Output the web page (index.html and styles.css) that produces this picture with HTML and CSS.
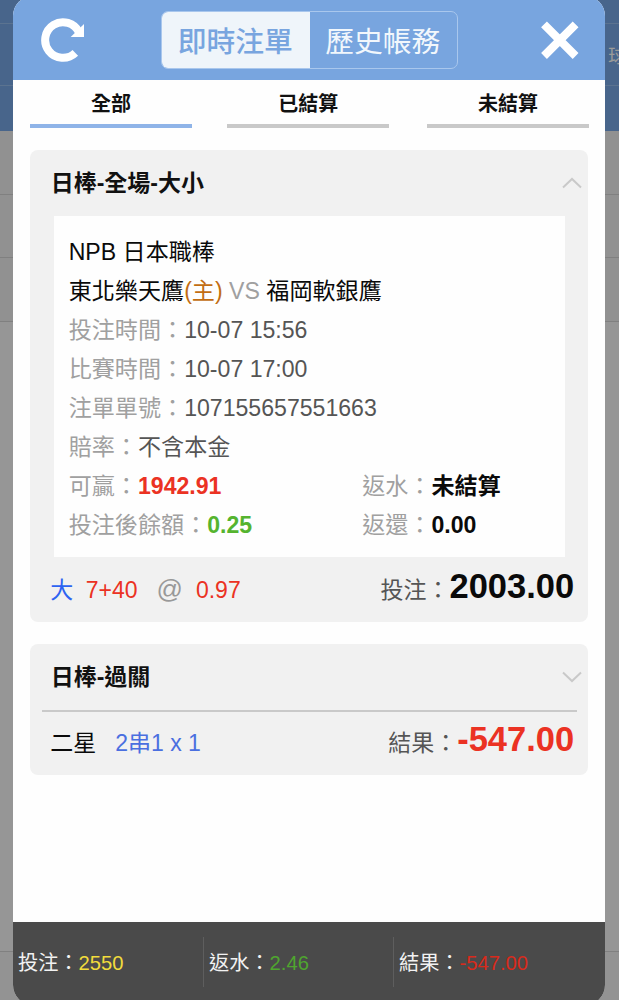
FILE: index.html
```html
<!DOCTYPE html>
<html lang="zh-TW">
<head>
<meta charset="utf-8">
<title>即時注單</title>
<link rel="stylesheet" href="styles.css">
</head>
<body>
<div class="screen">
  <div class="backdrop">
    <div class="backdrop-nav">
      <div class="nav-line nav-line-top"></div>
      <div class="nav-row"><span>球</span></div>
      <div class="nav-line nav-line-bottom"></div>
    </div>
    <div class="backdrop-row"></div>
    <div class="backdrop-row"></div>
    <div class="backdrop-row"></div>
    <div class="backdrop-row backdrop-fill"></div>
  </div>

  <main class="modal">
    <header class="header">
      <svg class="refresh" width="46" height="46" viewBox="0 0 46 46" aria-label="refresh">
        <path d="M35.3 35.9A17.8 17.8 0 1 1 39 15.3" fill="none" stroke="#fff" stroke-width="8"/>
        <path d="M44 7V19.9H30.7Z" fill="#fff"/>
      </svg>
      <div class="switch">
        <div class="switch-item switch-active">即時注單</div>
        <div class="switch-item">歷史帳務</div>
      </div>
      <svg class="close" width="38" height="38" viewBox="0 0 38 38" aria-label="close">
        <path d="M3 3.4L34.6 35M34.6 3.4L3 35" stroke="#fff" stroke-width="8.2"/>
      </svg>
    </header>

    <nav class="tabs">
      <div class="tab tab-active">全部</div>
      <div class="tab">已結算</div>
      <div class="tab">未結算</div>
    </nav>

    <section class="card">
      <div class="card-head">
        <h2>日棒-全場-大小</h2>
        <svg class="chevron" width="20" height="12" viewBox="0 0 20 12"><path d="M1 10.5L10 2L19 10.5" fill="none" stroke="#c9c9c9" stroke-width="2"/></svg>
      </div>
      <div class="detail">
        <div class="line name">NPB 日本職棒</div>
        <div class="line name">東北樂天鷹<span class="home">(主)</span> <span class="label">VS</span> 福岡軟銀鷹</div>
        <div class="line"><span class="label">投注時間：</span>10-07 15:56</div>
        <div class="line"><span class="label">比賽時間：</span>10-07 17:00</div>
        <div class="line"><span class="label">注單單號：</span>107155657551663</div>
        <div class="line"><span class="label">賠率：</span>不含本金</div>
        <div class="line pair">
          <div><span class="label">可贏：</span><b class="red">1942.91</b></div>
          <div><span class="label">返水：</span><b class="black">未結算</b></div>
        </div>
        <div class="line pair">
          <div><span class="label">投注後餘額：</span><b class="green">0.25</b></div>
          <div><span class="label">返還：</span><b class="black">0.00</b></div>
        </div>
      </div>
      <div class="summary">
        <div class="pick">
          <span class="pick-side">大</span>
          <span class="red pick-line">7+40</span>
          <span class="pick-at">@</span>
          <span class="red">0.97</span>
        </div>
        <div class="total"><span>投注：</span><b class="black">2003.00</b></div>
      </div>
    </section>

    <section class="card card-parlay">
      <div class="card-head">
        <h2>日棒-過關</h2>
        <svg class="chevron" width="20" height="12" viewBox="0 0 20 12"><path d="M1 1.5L10 10L19 1.5" fill="none" stroke="#c9c9c9" stroke-width="2"/></svg>
      </div>
      <div class="rule"></div>
      <div class="summary">
        <div class="pick">
          <span class="black parlay-name">二星</span>
          <span class="parlay">2串1 x 1</span>
        </div>
        <div class="total"><span>結果：</span><b class="red">-547.00</b></div>
      </div>
    </section>

    <footer class="footer">
      <div class="stat">投注：<span class="yellow">2550</span></div>
      <div class="stat">返水：<span class="green">2.46</span></div>
      <div class="stat">結果：<span class="red">-547.00</span></div>
    </footer>
  </main>
</div>
</body>
</html>
```
FILE: styles.css
```css
* { box-sizing: border-box; }

body {
  margin: 0;
  font-family: "Liberation Sans", "Noto Sans CJK TC", sans-serif;
  color: #555;
}

.screen {
  display: grid;
  height: 1000px;
  overflow: hidden;
}

.backdrop,
.modal { grid-area: 1 / 1; }

/* Dimmed page behind the dialog */
.backdrop {
  display: flex;
  flex-direction: column;
  height: 1000px;
  background: #939393;
}
.backdrop-nav {
  display: flex;
  flex-direction: column;
  height: 131px;
  padding-top: 23px;
  background: #48658b;
}
.nav-line { height: 1px; background: #5b7390; }
.nav-row {
  display: flex;
  align-items: center;
  height: 61px;
  padding-left: 608px;
  overflow: hidden;
  font-size: 19px;
  color: #9b9b99;
}
.backdrop-row {
  height: 63.5px;
  border-bottom: 1px solid #808080;
  background: #919191;
}
.backdrop-fill { height: 630px; background: #969696; }

/* Dialog */
.modal {
  display: flex;
  flex-direction: column;
  width: 592px;
  height: 1009px;
  margin: -4px 0 0 13px;
  border-radius: 20px;
  overflow: hidden;
  background: #fefefe;
}

.header {
  display: flex;
  flex: none;
  align-items: center;
  height: 84px;
  padding: 4px 26px 0 27px;
  background: #78a5df;
}
.switch {
  display: flex;
  width: 297px;
  height: 58px;
  margin: 0 0 0 75px;
  border: 1.5px solid #a9c7ed;
  border-radius: 7px;
  overflow: hidden;
}
.switch-item {
  flex: 1;
  font-size: 28.8px;
  line-height: 60px;
  text-align: center;
  color: #f2f7fc;
  text-indent: -1px;
}
.switch-active {
  background: #eff5fa;
  font-weight: 500;
  color: #78a5df;
}
.close { margin: 0 0 0 auto; }

.tabs {
  display: flex;
  flex: none;
  justify-content: space-between;
  height: 48px;
  margin: 0 16px 0 17px;
}
.tab {
  width: 162px;
  border-bottom: 4px solid #c9c9c9;
  font-size: 20px;
  font-weight: bold;
  line-height: 49px;
  text-align: center;
  color: #111;
}
.tab:nth-child(2) { margin-right: 2.4px; }
.tab-active { border-color: #8fb4e8; }

.card {
  flex: none;
  width: 558px;
  height: 472px;
  margin: 22px 0 0 17.2px;
  border-radius: 8px;
  background: #f1f1f1;
  font-size: 23px;
}
.card-head {
  display: flex;
  align-items: center;
  justify-content: space-between;
  height: 66px;
  padding: 0 6px 0 20.5px;
}
h2 {
  margin: 0;
  font-size: 23px;
  line-height: 34px;
  color: #111;
}
.detail {
  width: 511px;
  height: 341px;
  margin-left: 24px;
  padding: 17px 0 0 14.5px;
  background: #fefefe;
}
.line {
  height: 39px;
  line-height: 39px;
  white-space: nowrap;
  font-size: 23.1px;
}
.pair { display: grid; grid-template-columns: 293.5px 1fr; }
.name, .black { color: #0a0a0a; }
.label { color: #a0a0a0; }
.home { color: #c26d12; }
.red { color: #eb3223; }
.green { color: #55b42f; }
.yellow { color: #f2dc3c; }

.summary {
  display: flex;
  align-items: center;
  justify-content: space-between;
  height: 65px;
  padding: 0 14px 0 20px;
}
.pick,
.total {
  display: flex;
  align-items: baseline;
  line-height: 40px;
}
.total { margin-bottom: 4px; }
.pick-side { margin-right: 12.5px; color: #2d63f2; }
.pick-line { margin-right: 19px; }
.pick-at { margin-right: 13px; font-size: 26px; color: #999; }
.total b { font-size: 34.5px; }

.card-parlay { height: 131px; }
.rule { height: 1.5px; margin: 0 11px 0 12px; background: #c9c9c9; }
.card-parlay .summary { height: 62px; }
.card-parlay .total { margin-bottom: 3px; }
.parlay-name { margin-right: 19px; }
.parlay { color: #4a6fe0; }

.footer {
  display: grid;
  flex: none;
  grid-template-columns: 191px 190px 1fr;
  align-items: start;
  height: 83.5px;
  margin-top: auto;
  padding-top: 15px;
  background: #4a4a4a;
  color: #f2f2f2;
}
.stat {
  height: 50px;
  padding-left: 5px;
  border-right: 1px solid #5e5e5e;
  font-size: 20.2px;
  line-height: 52px;
}
.stat:last-child { border-right: 0; }
.footer .red { color: #d92a1c; }
.footer .green { color: #4fa52f; }
```
